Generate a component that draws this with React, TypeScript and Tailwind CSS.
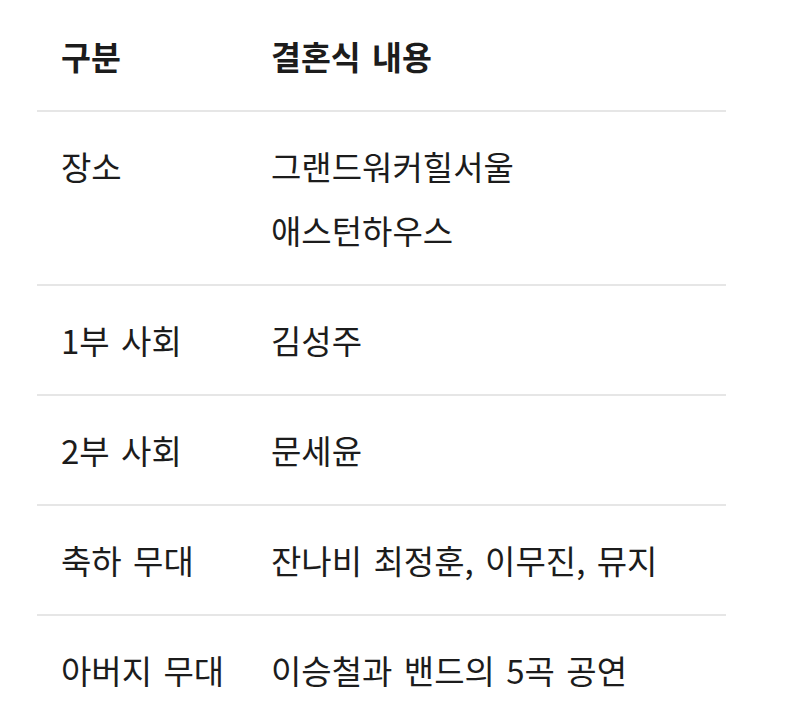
const rows: { label: string; content: string[] }[] = [
  { label: "장소", content: ["그랜드워커힐서울", "애스턴하우스"] },
  { label: "1부 사회", content: ["김성주"] },
  { label: "2부 사회", content: ["문세윤"] },
  { label: "축하 무대", content: ["잔나비 최정훈, 이무진, 뮤지"] },
  { label: "아버지 무대", content: ["이승철과 밴드의 5곡 공연"] },
]

export default function App() {
  return (
    <div
      className="min-h-[714px] w-[800px] bg-white text-[#1c1c1c] [word-spacing:4px]"
      style={{ fontFamily: '"Noto Sans CJK KR", "Noto Sans", sans-serif' }}
    >
      <div className="ml-[37px] w-[689px]">
        {/* header */}
        <div className="flex border-b-2 border-[#e6e6e6] pt-[24px] pb-[22px] text-[32.5px] leading-[64px] font-bold">
          <div className="w-[234px] flex-none pl-[24px]">구분</div>
          <div className="flex-1">결혼식 내용</div>
        </div>

        {rows.map((row, idx) => (
          <div
            key={row.label}
            className={
              idx === rows.length - 1
                ? "flex py-[22px] text-[33px] leading-[64px]"
                : "flex border-b-2 border-[#e6e6e6] py-[22px] text-[33px] leading-[64px]"
            }
          >
            <div className="w-[234px] flex-none pl-[24px] whitespace-nowrap">{row.label}</div>
            <div className="flex-1 whitespace-nowrap">
              {row.content.map((line) => (
                <div key={line}>{line}</div>
              ))}
            </div>
          </div>
        ))}
      </div>
    </div>
  )
}
